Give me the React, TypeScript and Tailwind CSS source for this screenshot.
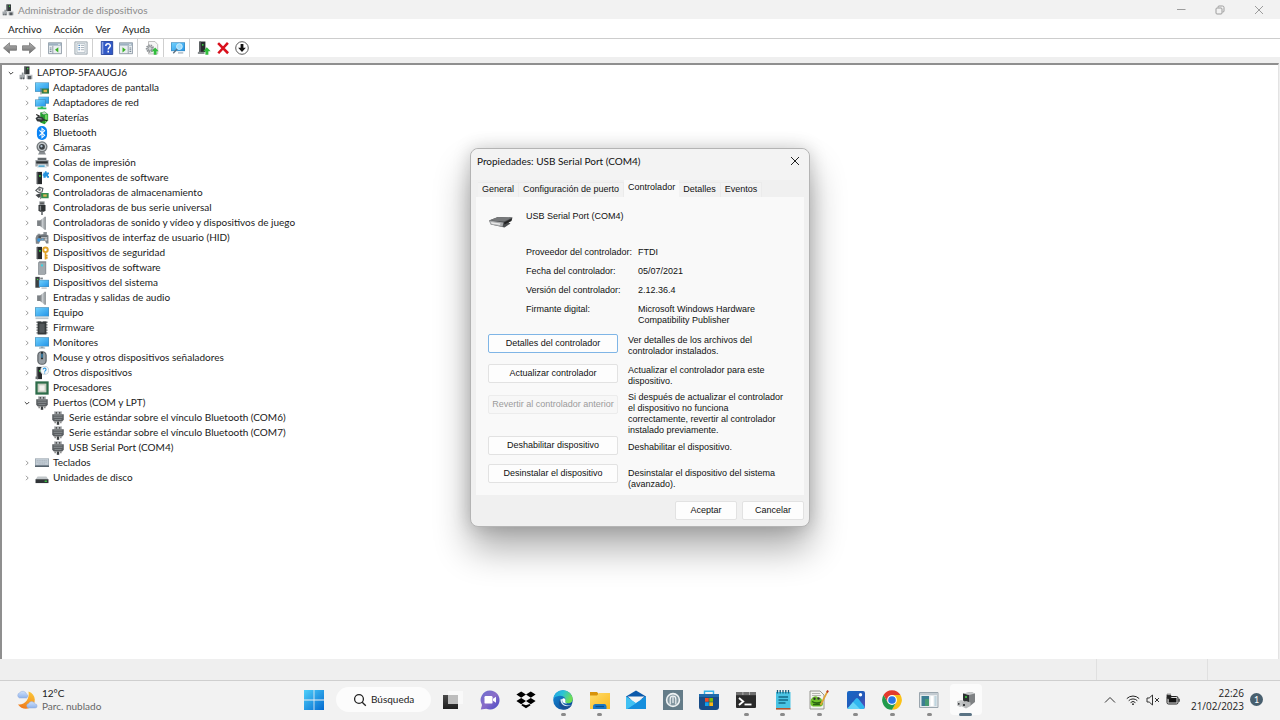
import type { ReactNode } from "react";

type IconProps = { children: ReactNode; className?: string };

function Svg16({ children, className = "size-3.5" }: IconProps) {
  return (
    <svg viewBox="0 0 16 16" className={`${className} shrink-0`} aria-hidden="true">
      {children}
    </svg>
  );
}

function Gradients() {
  return (
    <svg className="absolute size-0" aria-hidden="true">
      <defs>
        <linearGradient id="screen" x1="0" y1="0" x2="1" y2="1">
          <stop offset="0" stopColor="#6fd0fc" />
          <stop offset="1" stopColor="#2496ea" />
        </linearGradient>
        <linearGradient id="win" x1="0" y1="0" x2="1" y2="1">
          <stop offset="0" stopColor="#4fd0fb" />
          <stop offset="1" stopColor="#0269cf" />
        </linearGradient>
        <linearGradient id="chat" x1="0" y1="0" x2="1" y2="1">
          <stop offset="0" stopColor="#6b6fd0" />
          <stop offset="0.5" stopColor="#8a6cc8" />
          <stop offset="1" stopColor="#4348c6" />
        </linearGradient>
        <linearGradient id="edgeTop" x1="0" y1="0" x2="1" y2="0.4">
          <stop offset="0" stopColor="#1f9fe8" />
          <stop offset="0.5" stopColor="#2bc3d6" />
          <stop offset="1" stopColor="#6ede55" />
        </linearGradient>
        <linearGradient id="edgeLow" x1="0" y1="0" x2="0.8" y2="1">
          <stop offset="0" stopColor="#1690dc" />
          <stop offset="1" stopColor="#0c4a97" />
        </linearGradient>
        <linearGradient id="folder" x1="0" y1="0" x2="1" y2="1">
          <stop offset="0" stopColor="#ffdc6b" />
          <stop offset="1" stopColor="#fbb91e" />
        </linearGradient>
        <linearGradient id="photo" x1="0" y1="0" x2="1" y2="1">
          <stop offset="0" stopColor="#1767c5" />
          <stop offset="0.6" stopColor="#2659b8" />
          <stop offset="1" stopColor="#6a4bb8" />
        </linearGradient>
        <linearGradient id="moon" x1="0.7" y1="0" x2="0.3" y2="1">
          <stop offset="0" stopColor="#fbc537" />
          <stop offset="1" stopColor="#f07a1c" />
        </linearGradient>
        <linearGradient id="cloud" x1="0" y1="0" x2="0" y2="1">
          <stop offset="0" stopColor="#cfe1fb" />
          <stop offset="1" stopColor="#8fb3ec" />
        </linearGradient>
        <linearGradient id="dark" x1="0" y1="0" x2="0" y2="1">
          <stop offset="0" stopColor="#4a4a4a" />
          <stop offset="1" stopColor="#1e1e1e" />
        </linearGradient>
        <linearGradient id="cone" x1="0" y1="0" x2="1" y2="0">
          <stop offset="0" stopColor="#6c7175" />
          <stop offset="0.6" stopColor="#d3d7da" />
          <stop offset="1" stopColor="#7d8387" />
        </linearGradient>
        <linearGradient id="arrow" x1="0" y1="0" x2="0" y2="1">
          <stop offset="0" stopColor="#b5b5b5" />
          <stop offset="1" stopColor="#6e6e6e" />
        </linearGradient>
      </defs>
    </svg>
  );
}

/* ---------- device icons ---------- */

const Tower = () => (
  <>
    <path d="M2 1h6v14H2z" fill="#26292b" />
    <path d="M2 1h1.6v14H2z" fill="#55595c" />
    <circle cx="5.6" cy="5.6" r="1.1" fill="#35dd3b" />
  </>
);

const Computer = ({ className }: { className?: string }) => (
  <Svg16 className={className}>
    <path d="M6 0.5h6v9H6z" fill="#33383a" />
    <path d="M6 0.5h1.5v9H6z" fill="#6b7073" />
    <circle cx="10" cy="3" r="0.9" fill="#3fd444" />
    <path d="M3.2 7.5h2v3h-2z" fill="#8d9296" />
    <path d="M0.6 10h6.2v5H0.6z" fill="#a7acb0" />
    <path d="M8.6 10h6.8v5H8.6z" fill="#b9bdc0" />
    <path d="M1.8 13h1.4v2H1.8zM4.4 13h1.4v2H4.4zM10 11.4h4v3.6h-4z" fill="#54595d" />
  </Svg16>
);

const Display = () => (
  <Svg16>
    <path d="M0 1.6h16v10.8H0z" fill="#4a8fb8" />
    <path d="M0.7 2.3h14.6v9.4H0.7z" fill="url(#screen)" />
    <path d="M7.5 8.6H16v5.8H7.5z" fill="#2f7a45" />
    <path d="M9.8 10h4v2.8h-4z" fill="#d9b34a" />
    <path d="M6.8 8v7.4" stroke="#777" />
  </Svg16>
);

const Network = () => (
  <Svg16>
    <path d="M4 0.8h12v8H4z" fill="#4a8fb8" />
    <path d="M4.6 1.4h10.8v6.8H4.6z" fill="url(#screen)" />
    <path d="M0 4h12.4v8H0z" fill="#3c84b0" />
    <path d="M0.6 4.6h11.2v6.8H0.6z" fill="url(#screen)" />
    <path d="M3 13.2h10v1.8H3zM6.4 12h3v2h-3z" fill="#2fbf5a" />
  </Svg16>
);

const Battery = () => (
  <Svg16>
    <path d="M6 1.6l5-1 4 3v7l-4 4.4-5-2z" fill="#259b31" />
    <path d="M7 2l4-.8 2.6 2L9.8 4z" fill="#c9d6cb" />
    <path d="M11.4 4.4v9.4l2.8-3.2V4z" fill="#6fd65f" />
    <path d="M0.6 8.4l3-2.6 5.6 1.6 1.4 3-3.4 2.2-4.8-.8z" fill="#33383a" />
    <path d="M1.4 4l4 2M9.6 10l4.4 1" stroke="#222" strokeWidth="1.3" />
    <path d="M3 8.6l4.6.6" stroke="#9da3a5" strokeWidth="1.2" />
  </Svg16>
);

const Bluetooth = () => (
  <Svg16>
    <rect x="2.2" y="0" width="11.6" height="16" rx="5.6" fill="#0a84f5" />
    <path d="M5 5l6 5.6-3 2.6V2.8l3 2.6L5 11" fill="none" stroke="#fff" strokeWidth="1.2" />
  </Svg16>
);

const Camera = () => (
  <Svg16>
    <circle cx="8" cy="6.6" r="6.3" fill="#74797c" />
    <circle cx="8" cy="6.6" r="4.8" fill="#c3c8cb" />
    <circle cx="8" cy="6.6" r="3.3" fill="#3b4044" />
    <circle cx="7.4" cy="6" r="1.3" fill="#b0c4d4" />
    <path d="M5 12.6h6l1.6 2.8H3.4z" fill="#878c90" />
  </Svg16>
);

const Printer = () => (
  <Svg16>
    <path d="M3 2h10v3H3z" fill="#63696d" />
    <path d="M0.4 4.6h15.2V12H0.4z" fill="#9ea4a8" />
    <path d="M1.4 6h13.2v2.6H1.4z" fill="#2e3335" />
    <path d="M3.4 9.6h9.2l1 4H2.4z" fill="#dfe9ee" />
    <path d="M4 10.6h7v2H4z" fill="#57a9cf" />
  </Svg16>
);

const Component = () => (
  <Svg16>
    <Tower />
    <path d="M9.6 1.8h1.8V.4h1.8v1.4H16v2h-1v1.8h1v2h-2.4V6.4h-1.4v1.2H9.6V5.4h-.8V3.6h.8z" fill="#2592dd" />
  </Svg16>
);

const Storage = () => (
  <Svg16>
    <path d="M1 5l4-3.6 4 1.4-1 4-4 .6z" fill="none" stroke="#555b5e" strokeWidth="1.3" />
    <circle cx="5.2" cy="4.2" r="1.5" fill="#777" />
    <path d="M0.6 10.4l6-2.4 2.6 2.4-5 3.4z" fill="#44494c" />
    <path d="M7 8h8.6v6H7z" fill="#338b4e" />
    <path d="M9.4 9.6h4v2.6h-4z" fill="#d7b653" />
    <path d="M6.4 7.2V15" stroke="#777" />
  </Svg16>
);

const UsbPlug = () => (
  <Svg16>
    <path d="M5 0.4h6V5H5z" fill="#8c9194" />
    <path d="M6.4 1.6h1v1.8h-1zM8.6 1.6h1v1.8h-1z" fill="#222" />
    <path d="M4 4.6h8v6l-1.6 1.8H5.6L4 10.6z" fill="#2f3335" />
    <path d="M5.4 5.4H7v5.4H5.4z" fill="#85898c" />
    <path d="M7.2 12.4h1.6V16H7.2z" fill="#4d5256" />
  </Svg16>
);

const Speaker = () => (
  <Svg16>
    <path d="M2.4 5h3.4v6.4H2.4z" fill="#7c8185" />
    <path d="M5.8 5L11 .8v15l-5.2-4.4z" fill="url(#cone)" />
    <path d="M11 .8h1.4v15H11z" fill="#878d91" />
  </Svg16>
);

const Hid = () => (
  <Svg16>
    <path d="M3 3.2h3v2H3zM9.6 1h4v3h-4z" fill="#8f9599" />
    <path d="M2 4.6L12 3l3.4 2.2v9h-2.6L11.4 11H6l-1.4 3.6H1L.6 8z" fill="#7e8489" />
    <path d="M4 5.4h10V8H4z" fill="#4a5054" />
    <path d="M7 6.6h7v1.2H7z" fill="#c9cdd0" />
    <circle cx="4.4" cy="10.2" r="2" fill="#3995dd" />
    <circle cx="8.6" cy="9.6" r="1.1" fill="#5baae0" />
    <circle cx="12.6" cy="9.8" r="1.4" fill="#c3c8cb" />
  </Svg16>
);

const Security = () => (
  <Svg16>
    <Tower />
    <circle cx="12" cy="4.4" r="2.6" fill="none" stroke="#dfa126" strokeWidth="2.2" />
    <path d="M12 7v8.4M12 11h2.4M12 13.6h2.4" stroke="#dfa126" strokeWidth="1.9" />
  </Svg16>
);

const SoftwareDevice = () => (
  <Svg16>
    <path d="M3.6 1.6L5 .4h7.8v13.8l-1.4 1.4H3.6z" fill="#868d92" />
    <path d="M4.4 2h7.4v13H4.4z" fill="#a2a9ae" />
    <circle cx="8" cy="5" r="1.2" fill="#31d7e8" />
  </Svg16>
);

const SystemDevice = () => (
  <Svg16>
    <path d="M0.4 1h5v12.4h-5z" fill="#3b4043" />
    <path d="M6 1.8h3v2H6z" fill="#7e8489" />
    <circle cx="3" cy="4" r="0.8" fill="#41dd44" />
    <path d="M4.4 4.4H16v8.2H4.4z" fill="#4a8fb8" />
    <path d="M5 5h10.4v7H5z" fill="url(#screen)" />
    <path d="M7.4 13.2h6v1.2h-6z" fill="#a2a9ae" />
  </Svg16>
);

const Desktop = ({ stand = true }: { stand?: boolean }) => (
  <Svg16>
    <path d="M0 1.4h16V12H0z" fill="#4a8fb8" />
    <path d="M0.7 2.1h14.6v9.2H0.7z" fill="url(#screen)" />
    {stand ? (
      <path d="M0.6 13h14.8v2H0.6z" fill="#b9c4cb" />
    ) : (
      <path d="M6.6 12h3v1.2h2v1.2h-7v-1.2h2z" fill="#8ea3b0" />
    )}
  </Svg16>
);

const Chip = () => (
  <Svg16>
    <path d="M1.6 1.4h12.8M1.6 4.4h12.8M1.6 7.4h12.8M1.6 10.4h12.8M1.6 13.6h12.8" stroke="#777c7f" strokeWidth="1.6" />
    <path d="M3 .6h3.4l1.6 1 1.6-1H13v14.8H3z" fill="#34383a" />
    <path d="M5 3h6v10.4H5z" fill="#53585b" />
  </Svg16>
);

const Mouse = () => (
  <Svg16>
    <rect x="2.6" y="0.2" width="10.8" height="15.6" rx="4.8" fill="#5b6165" />
    <rect x="4" y="1.4" width="8" height="13.2" rx="3.6" fill="#979ea3" />
    <path d="M6.8 1h2.4v8.4H6.8z" fill="#2b3033" />
    <path d="M7.4 3h1.2v4.6H7.4z" fill="#3fb1f1" />
  </Svg16>
);

const Unknown = () => (
  <Svg16>
    <Tower />
    <path d="M0.6 12h3v3h-3z" fill="#6a6e70" />
    <circle cx="11" cy="5" r="4.6" fill="#f4f8fa" stroke="#b4bcc1" strokeWidth="0.7" />
    <path d="M9.4 4a1.6 1.6 0 1 1 2.4 1.4c-.6.3-.8.5-.8 1.2M11 7.5v1" fill="none" stroke="#2592dd" strokeWidth="1.2" />
  </Svg16>
);

const Cpu = () => (
  <Svg16>
    <path d="M0.4 0.4h15.2v15.2H0.4z" fill="#2d6d4a" />
    <path d="M3 3h10v10H3z" fill="#c9cec2" />
    <path d="M5 5h6v6H5z" fill="#f2f2ee" />
  </Svg16>
);

const Port = () => (
  <Svg16>
    <path d="M3.6 0.4h8.8v3.4H3.6z" fill="#a9adb0" />
    <path d="M5.4 1h1.3v2.2H5.4zM9.3 1h1.3v2.2H9.3z" fill="#444" />
    <path d="M1.4 3.6h13.2V10l-1.8 2H3.2l-1.8-2z" fill="#5a5e61" />
    <path d="M3 5h10v1H3zM3 7h10v1H3zM4 9h8v1H4z" fill="#8c9194" />
    <path d="M6.6 12h2.8v3.8H6.6z" fill="#3b3f41" />
    <path d="M4 12h1.5v2H4zM10.5 12H12v2h-1.5z" fill="#777" />
  </Svg16>
);

const Keyboard = () => (
  <Svg16>
    <path d="M0 2.8h16v9H0z" fill="#8d9aa5" />
    <path d="M0.7 3.4h14.6v6.8H0.7z" fill="#c3cdd5" />
    <path d="M2 5h12M2 7h12M4 9h8" stroke="#a3aeb8" strokeWidth="0.8" strokeDasharray="1.5 .5" />
    <path d="M0 11h16v1.6H0z" fill="#55616b" />
  </Svg16>
);

const Disk = () => (
  <Svg16>
    <path d="M3 6.4h10l2.4 3.2H0.6z" fill="#c2c7ca" />
    <path d="M0.6 9.4h14.8v4.4H0.6z" fill="#303437" />
    <path d="M11 11h2.6v1.4H11z" fill="#3bdb42" />
  </Svg16>
);

/* ---------- device tree ---------- */

type Device = { label: string; icon: ReactNode; level: 0 | 1 | 2; state?: "open" | "closed" };

const devices: Device[] = [
  { label: "LAPTOP-5FAAUGJ6", icon: <Computer />, level: 0, state: "open" },
  { label: "Adaptadores de pantalla", icon: <Display />, level: 1, state: "closed" },
  { label: "Adaptadores de red", icon: <Network />, level: 1, state: "closed" },
  { label: "Baterías", icon: <Battery />, level: 1, state: "closed" },
  { label: "Bluetooth", icon: <Bluetooth />, level: 1, state: "closed" },
  { label: "Cámaras", icon: <Camera />, level: 1, state: "closed" },
  { label: "Colas de impresión", icon: <Printer />, level: 1, state: "closed" },
  { label: "Componentes de software", icon: <Component />, level: 1, state: "closed" },
  { label: "Controladoras de almacenamiento", icon: <Storage />, level: 1, state: "closed" },
  { label: "Controladoras de bus serie universal", icon: <UsbPlug />, level: 1, state: "closed" },
  { label: "Controladoras de sonido y vídeo y dispositivos de juego", icon: <Speaker />, level: 1, state: "closed" },
  { label: "Dispositivos de interfaz de usuario (HID)", icon: <Hid />, level: 1, state: "closed" },
  { label: "Dispositivos de seguridad", icon: <Security />, level: 1, state: "closed" },
  { label: "Dispositivos de software", icon: <SoftwareDevice />, level: 1, state: "closed" },
  { label: "Dispositivos del sistema", icon: <SystemDevice />, level: 1, state: "closed" },
  { label: "Entradas y salidas de audio", icon: <Speaker />, level: 1, state: "closed" },
  { label: "Equipo", icon: <Desktop />, level: 1, state: "closed" },
  { label: "Firmware", icon: <Chip />, level: 1, state: "closed" },
  { label: "Monitores", icon: <Desktop stand={false} />, level: 1, state: "closed" },
  { label: "Mouse y otros dispositivos señaladores", icon: <Mouse />, level: 1, state: "closed" },
  { label: "Otros dispositivos", icon: <Unknown />, level: 1, state: "closed" },
  { label: "Procesadores", icon: <Cpu />, level: 1, state: "closed" },
  { label: "Puertos (COM y LPT)", icon: <Port />, level: 1, state: "open" },
  { label: "Serie estándar sobre el vínculo Bluetooth (COM6)", icon: <Port />, level: 2 },
  { label: "Serie estándar sobre el vínculo Bluetooth (COM7)", icon: <Port />, level: 2 },
  { label: "USB Serial Port (COM4)", icon: <Port />, level: 2 },
  { label: "Teclados", icon: <Keyboard />, level: 1, state: "closed" },
  { label: "Unidades de disco", icon: <Disk />, level: 1, state: "closed" },
];

const indents = { 0: "pl-1", 1: "pl-5", 2: "pl-9" };

function DeviceTree() {
  return (
    <ul role="tree" className="text-[10px] leading-[15px] text-[#1a1a1a]">
      {devices.map((d) => (
        <li
          key={d.label}
          role="treeitem"
          aria-level={d.level + 1}
          className={`flex h-[15px] items-center ${indents[d.level]}`}
        >
          {d.state ? (
            <button
              type="button"
              aria-label={`${d.state === "open" ? "Contraer" : "Expandir"} ${d.label}`}
              className="mr-[3px] flex size-2.5 items-center justify-center"
            >
              <svg viewBox="0 0 10 10" className="size-2.5" fill="none">
                {d.state === "open" ? (
                  <path d="M2.8 4L5 6.2 7.2 4" stroke="#444" />
                ) : (
                  <path d="M4 2.8L6.2 5 4 7.2" stroke="#9a9a9a" />
                )}
              </svg>
            </button>
          ) : (
            <span className="mr-[3px] w-2.5" />
          )}
          {d.icon}
          <span className="ml-1 whitespace-nowrap">{d.label}</span>
        </li>
      ))}
    </ul>
  );
}

/* ---------- toolbar ---------- */

function ToolButton({ label, children }: { label: string; children: ReactNode }) {
  return (
    <button type="button" aria-label={label} className="flex size-3.5 items-center justify-center">
      <Svg16>{children}</Svg16>
    </button>
  );
}

const Sep = () => <span className="mr-[7px] ml-1 w-px self-stretch bg-[#cfcfcf]" />;
const Group = ({ children }: { children: ReactNode }) => <div className="flex items-center gap-[5px]">{children}</div>;

const WindowFrame = () => (
  <>
    <path d="M0.5 2h15v12.5h-15z" fill="#e9edf0" stroke="#8a97a2" />
    <path d="M1 2.500h14v2.800H1z" fill="#9db0c0" />
    <path d="M11.5 3.900h2.500" stroke="#e8eef2" />
  </>
);

function Toolbar() {
  return (
    <div role="toolbar" aria-label="Herramientas" className="flex h-[18px] items-center bg-white pl-[3px]">
      <Group>
        <ToolButton label="Atrás">
          <path d="M0.6 8L7.4 2v3.4h8v5.2h-8V14z" fill="url(#arrow)" stroke="#6b6b6b" strokeWidth="0.8" />
        </ToolButton>
        <ToolButton label="Adelante">
          <path d="M15.4 8L8.6 2v3.4h-8v5.2h8V14z" fill="url(#arrow)" stroke="#6b6b6b" strokeWidth="0.8" />
        </ToolButton>
      </Group>
      <Sep />
      <ToolButton label="Mostrar u ocultar árbol de consola">
        <WindowFrame />
        <path d="M5.5 5.5v9" stroke="#8a97a2" />
        <path d="M2 8h2M2 10h2M2 12h2" stroke="#67798a" />
        <path d="M11.8 7v6L8 10z" fill="#39b224" />
      </ToolButton>
      <Sep />
      <ToolButton label="Propiedades">
        <path d="M1 1h14v14H1z" fill="#e6eaed" stroke="#98a3ac" />
        <path d="M3.5 3h9v10h-9z" fill="#fff" stroke="#a5b1ba" strokeWidth="0.8" />
        <path d="M5 5h2M5 7.5h2M5 10h2" stroke="#5b92c4" strokeWidth="1.3" />
        <path d="M8 5h3.5M8 7.5h3.5M8 10h3.5" stroke="#9aa6af" />
      </ToolButton>
      <Sep />
      <Group>
        <ToolButton label="Ayuda">
          <path d="M1.5 0.5h13v15h-13z" fill="#3159c6" stroke="#1f3e98" />
          <path d="M2 1h1.8v14H2z" fill="#8ea6e6" />
          <path d="M6.6 5.6c0-3.4 5.2-3.2 5.2-.2 0 2-2.4 2-2.4 4.2M9.4 11.2v1.9" fill="none" stroke="#fff" strokeWidth="1.7" />
        </ToolButton>
        <ToolButton label="Mostrar u ocultar panel de acciones">
          <WindowFrame />
          <path d="M10.5 5.5v9" stroke="#8a97a2" />
          <path d="M12 8h2M12 10h2M12 12h2" stroke="#67798a" />
          <path d="M4 7v6l3.8-3z" fill="#39b224" />
        </ToolButton>
      </Group>
      <Sep />
      <ToolButton label="Actualizar controlador">
        <path d="M4 .6h7.4L14.5 4v10.8H4z" fill="#f5f5f5" stroke="#b0b0b0" strokeWidth="0.9" />
        <circle cx="5.6" cy="8.6" r="3.5" fill="none" stroke="#8d9296" strokeWidth="2.4" strokeDasharray="1.6 .8" />
        <circle cx="5.6" cy="8.6" r="2.2" fill="#d5d8da" stroke="#8d9296" />
        <path d="M11.6 7.4l4 4.2h-2.400v4H10v-4H7.600z" fill="#31bd3c" />
      </ToolButton>
      <Sep />
      <ToolButton label="Buscar cambios de hardware">
        <path d="M0 1.5h16v10.100H0z" fill="#3c89bc" />
        <path d="M0.7 2.2h14.600v8.700H0.700z" fill="url(#screen)" />
        <circle cx="9.6" cy="6.4" r="3.3" fill="#9adcfd" stroke="#dff3fd" strokeWidth="0.9" />
        <path d="M7 9L2.6 14" stroke="#5c7180" strokeWidth="1.6" />
        <path d="M8 12.8h6v1.600H8z" fill="#a9b8c3" />
      </ToolButton>
      <Sep />
      <Group>
        <ToolButton label="Agregar controladores">
          <path d="M2.6 0.6h7v12h-7z" fill="#272b2d" />
          <path d="M2.6 0.6h1.8v12H2.6z" fill="#5a5f62" />
          <circle cx="6.6" cy="4.4" r="1" fill="#3bdb42" />
          <path d="M1 12.4h7.6v2.4H1z" fill="#84898c" />
          <path d="M11.2 7l4.4 4.6H13v4H9.6v-4H7z" fill="#31bd3c" />
        </ToolButton>
        <ToolButton label="Desinstalar dispositivo">
          <path d="M2.4 2.4L13.8 14M13.6 2.2L2.6 14" stroke="#d9101c" strokeWidth="2.9" />
        </ToolButton>
        <ToolButton label="Deshabilitar dispositivo">
          <circle cx="8" cy="8" r="7.2" fill="#fff" stroke="#555" strokeWidth="1.1" />
          <path d="M6.4 3.4h3.2v4.2h2.8L8 12.6 3.6 7.6h2.8z" fill="#111" />
        </ToolButton>
      </Group>
    </div>
  );
}

/* ---------- properties dialog ---------- */

const tabs = ["General", "Configuración de puerto", "Controlador", "Detalles", "Eventos"];

const facts = [
  ["Proveedor del controlador:", "FTDI"],
  ["Fecha del controlador:", "05/07/2021"],
  ["Versión del controlador:", "2.12.36.4"],
  ["Firmante digital:", "Microsoft Windows Hardware Compatibility Publisher"],
];

const actions = [
  { id: "details", label: "Detalles del controlador", text: "Ver detalles de los archivos del controlador instalados.", row: "h-[30px]", button: "border-[#7fb5e6]", desc: "pt-px" },
  { id: "update", label: "Actualizar controlador", text: "Actualizar el controlador para este dispositivo.", row: "h-[27px]", button: "border-[#e2e2e2]", desc: "pt-px" },
  { id: "revert", label: "Revertir al controlador anterior", text: "Si después de actualizar el controlador el dispositivo no funciona correctamente, revertir al controlador instalado previamente.", row: "h-[45px]", button: "mt-1 border-[#ececec]", desc: "pt-px", disabled: true },
  { id: "disable", label: "Deshabilitar dispositivo", text: "Deshabilitar el dispositivo.", row: "h-7", button: "border-[#e2e2e2]", desc: "pt-1.5" },
  { id: "uninstall", label: "Desinstalar el dispositivo", text: "Desinstalar el dispositivo del sistema (avanzado).", row: "h-[30px]", button: "border-[#e2e2e2]", desc: "pt-1" },
];

function PropertiesDialog() {
  return (
    <section
      role="dialog"
      aria-labelledby="dialog-title"
      className="flex w-[340px] flex-col rounded-lg border border-[#b4b4b4] bg-[#f0f0f0] px-[5px] pb-1.5 font-['Liberation_Sans',Arial,sans-serif] text-[9px] leading-[11px] text-[#111] shadow-[0_22px_36px_rgba(0,0,0,0.32),0_0_18px_rgba(0,0,0,0.18)]"
    >
      <header className="-mx-[5px] flex h-[31px] items-center justify-between rounded-t-lg bg-[#f3f3f3] pr-2 pb-2 pl-1.5">
        <h2 id="dialog-title" className="font-[Lato,'Noto_Sans',sans-serif] text-[10px] leading-4">
          Propiedades: USB Serial Port (COM4)
        </h2>
        <button type="button" aria-label="Cerrar" className="flex size-3 items-center justify-center">
          <svg viewBox="0 0 12 12" className="size-3" fill="none" stroke="#222">
            <path d="M2 2l8 8M10 2l-8 8" />
          </svg>
        </button>
      </header>
      <div role="tablist" className="flex items-end pl-0.5">
        {tabs.map((t) => (
          <button
            key={t}
            type="button"
            role="tab"
            aria-selected={t === "Controlador"}
            className={
              t === "Controlador"
                ? "h-[17px] bg-[#f9f9f9] px-1 pb-0.5"
                : "h-[15px] border-t border-r border-[#ebebeb] bg-[#f2f2f2] px-1 pb-0.5"
            }
          >
            {t}
          </button>
        ))}
      </div>
      <div role="tabpanel" className="bg-[#f9f9f9] pt-3.5 pr-4 pb-px pl-3">
        <div className="flex h-9">
          <svg viewBox="0 0 26 14" className="mt-1 h-3.5 w-[26px]" aria-hidden="true">
            <path d="M1 5.5L10 2l14.5.5-1 3.5-3 1.5 2 1-6 4L3 9.500z" fill="#4b4d4f" />
            <path d="M1 5.5L10 2l14.5.5-8.500 4z" fill="#77797b" />
            <path d="M1 5.5l14.5 2-1 4.3L2.500 9.500z" fill="#a9abad" />
            <path d="M3 7l9.5 1.5-.5 1.6-8.500-1.400z" fill="#e8e8e8" />
            <path d="M16 7.500l8-4-1 2.500-6.500 3.500z" fill="#222" />
          </svg>
          <p className="ml-3">USB Serial Port (COM4)</p>
        </div>
        <dl className="ml-[38px] grid h-[87px] auto-rows-[19px] grid-cols-[112px_1fr]">
          {facts.map(([k, v]) => (
            <div key={k} className="contents">
              <dt className="whitespace-nowrap">{k}</dt>
              <dd className="pr-2">{v}</dd>
            </div>
          ))}
        </dl>
        {actions.map((a) => (
          <div key={a.id} className={`flex items-start ${a.row}`}>
            <button
              type="button"
              disabled={a.disabled}
              aria-describedby={`${a.id}-text`}
              className={`mr-2.5 h-[19px] w-[130px] shrink-0 rounded-xs border bg-[#fdfdfd] text-center whitespace-nowrap disabled:bg-[#f7f7f7] disabled:text-[#9b9b9b] ${a.button}`}
            >
              {a.label}
            </button>
            <p id={`${a.id}-text`} className={a.desc}>
              {a.text}
            </p>
          </div>
        ))}
      </div>
      <footer className="mt-1.5 flex justify-end gap-[5px]">
        {["Aceptar", "Cancelar"].map((b) => (
          <button key={b} type="button" className="h-[19px] w-[62px] rounded-xs border border-[#e2e2e2] bg-[#fdfdfd]">
            {b}
          </button>
        ))}
      </footer>
    </section>
  );
}

/* ---------- taskbar ---------- */

function TaskIcon({ children }: { children: ReactNode }) {
  return (
    <svg viewBox="0 0 20 20" className="size-5" aria-hidden="true">
      {children}
    </svg>
  );
}

type TaskApp = { name: string; mark?: "dot" | "active"; art: ReactNode };

const apps: TaskApp[] = [
  {
    name: "Vista de tareas",
    art: (
      <>
        <path d="M0 5h15v14H0z" fill="url(#dark)" />
        <path d="M5 1h15v13H5z" fill="#fafafa" fillOpacity="0.85" />
        <path d="M5 5h10v9H5z" fill="#bdbdbd" />
      </>
    ),
  },
  {
    name: "Chat",
    art: (
      <>
        <path d="M10 .5a9.5 9.5 0 1 1-3.8 18.2L.8 19.500l1.200-4.600A9.500 9.500 0 0 1 10 .5z" fill="url(#chat)" />
        <rect x="4.5" y="6" width="8" height="7.6" rx="1.2" fill="#fff" />
        <path d="M13 8.800l3-2v6l-3-2z" fill="#fff" />
      </>
    ),
  },
  {
    name: "Dropbox",
    art: (
      <path
        d="M5.2 1.5L10 4.600 5.200 7.700.4 4.600zM14.800 1.500l4.800 3.100-4.800 3.100L10 4.600zM5.200 8l4.800 3.100-4.800 3.100-4.800-3.100zM14.800 8l4.800 3.100-4.800 3.100L10 11.100zM10 15.200l3.600-1.200 1 1.200-4.600 3-4.600-3 1-1.200z"
        fill="#000"
      />
    ),
  },
  {
    name: "Microsoft Edge",
    mark: "dot",
    art: (
      <>
        <circle cx="10" cy="10" r="9.8" fill="url(#edgeLow)" />
        <path d="M.3 9C1.500-.5 12-2 17 3.200c4 4.200 3.500 9.300-.8 10-2.500.4-4.600-.3-4.400-1.500.2-.8.900-1 .7-2.400C12.100 6.800 9.500 5.600 6.500 5.800 3.500 6 1.200 7.500.3 9z" fill="url(#edgeTop)" />
        <path d="M7.300 9.500c-.8 4 2.600 7.700 6.900 7.300 2-.2 3.700-1.200 4.500-1.900-3 1.400-8 .8-9.200-2.600-.5-1.600 0-2.700.8-3.500z" fill="#f2f8fc" fillOpacity="0.9" />
        <path d="M7.300 9.500C4.500 13 7 19 12 19.600c3.500-.3 6-2.500 7-5-2.500 2-7.500 2.400-10-.6-1-1.300-1.800-2.900-1.700-4.500z" fill="#174f93" />
        <path d="M10.300 8.300c1.800-.2 2.600 1.500 2 2.700-.6 1.300.3 2 2 2.400-2.700.6-4.800-.7-5-2.600-.1-1.200.3-2.200 1-2.500z" fill="#fff" />
      </>
    ),
  },
  {
    name: "Explorador de archivos",
    mark: "dot",
    art: (
      <>
        <path d="M0 2h7l2 2.500V7H0z" fill="#d8930b" />
        <path d="M0 5.500h7L9 3h11v16H0z" fill="url(#folder)" />
        <path d="M3 19v-2.500Q3 14 5.500 14h9q2 0 2 2.500V19z" fill="#1b77c5" />
        <path d="M5.500 16.500h8.500" stroke="#0c4f8b" strokeWidth="1.3" />
      </>
    ),
  },
  {
    name: "Correo",
    art: (
      <>
        <path d="M0 6.500L10 .5l10 6v3H0z" fill="#0b59ab" />
        <path d="M1.500 6.500h17L10 13.500z" fill="#f4f4f4" />
        <path d="M0 6.500l10 6.800 10-6.800V19H0z" fill="#2fb1ee" />
        <path d="M20 6.500L1 19h19z" fill="#168fdd" />
        <path d="M0 6.500L10 13.200 1 19H0z" fill="#41c1f3" />
      </>
    ),
  },
  {
    name: "Soporte",
    art: (
      <>
        <path d="M0 0h20v20H0z" fill="#647c88" />
        <circle cx="10" cy="10" r="6.4" fill="#8397a0" stroke="#eef2f3" strokeWidth="1.6" />
        <path d="M7.200 14.500V9a2.800 2.800 0 0 1 5.600 0v5.500M10 7v6" fill="none" stroke="#eef2f3" strokeWidth="1.2" />
      </>
    ),
  },
  {
    name: "Microsoft Store",
    art: (
      <>
        <path d="M5.500 5V1.200h9V5" fill="none" stroke="#34b4ea" strokeWidth="1.4" />
        <path d="M0 4h20v13a3 3 0 0 1-3 3H3a3 3 0 0 1-3-3z" fill="#184c87" />
        <path d="M0 4h20v3H0z" fill="#1f6bab" />
        <path d="M6 8h3.700v3.700H6z" fill="#ef4a26" />
        <path d="M10.300 8H14v3.700h-3.700z" fill="#7cba0a" />
        <path d="M6 12.300h3.700V16H6z" fill="#12a1ec" />
        <path d="M10.300 12.300H14V16h-3.700z" fill="#fdb813" />
      </>
    ),
  },
  {
    name: "Símbolo del sistema",
    mark: "dot",
    art: (
      <>
        <rect y="2" width="20" height="16" rx="1" fill="#2b2b2b" />
        <path d="M0 2h20v3.200H0z" fill="#707070" />
        <path d="M6.500 2h.8v3h-.8zM13 2h.8v3H13z" fill="#bbb" />
        <path d="M3 8l4.200 3.500L3 15" fill="none" stroke="#fff" strokeWidth="1.9" />
        <path d="M8.500 14.500h7" stroke="#fff" strokeWidth="1.8" />
      </>
    ),
  },
  {
    name: "Bloc de notas",
    mark: "dot",
    art: (
      <>
        <path d="M3 2h14.500v16H3z" fill="#4ac4e4" />
        <path d="M3 18h14.500v1.600H3z" fill="#b5532c" />
        <path d="M4.500 0v3.500M7.200 0v3.500M10 0v3.500M12.800 0v3.500M15.500 0v3.500" stroke="#185c77" strokeWidth="1.3" />
        <path d="M5.500 7h9.500M5.500 10h9.500M5.500 13h7" stroke="#136987" strokeWidth="1.4" />
      </>
    ),
  },
  {
    name: "Notepad++",
    mark: "dot",
    art: (
      <>
        <path d="M1 1h10l4 4v14H1z" fill="#f3f3f0" stroke="#8d8d86" strokeWidth="0.9" />
        <path d="M3 3.500h8M3 5.500h9" stroke="#b6b6b0" />
        <path d="M2 9.500c2-3.500 5-4 7-2.300 3 .3 4.500 2 4 4.300 2 1.500 1 5-1.500 5H4c-3-1-3-4-2-7z" fill="#6fc12c" />
        <path d="M3 11.500c3 2 6 2 9.500.5M4 14.500h8" fill="none" stroke="#2a6412" strokeWidth="1.4" />
        <circle cx="5.5" cy="8.8" r="1.2" fill="#333" />
        <circle cx="9.5" cy="8.5" r="1.2" fill="#333" />
        <path d="M18.800.8L11.500 15" stroke="#e1a437" strokeWidth="1.7" />
        <path d="M19 .5l-1 2" stroke="#bf3b2c" strokeWidth="1.8" />
      </>
    ),
  },
  {
    name: "Fotos",
    mark: "dot",
    art: (
      <>
        <rect x="1" y="1" width="18" height="18" rx="2" fill="url(#photo)" />
        <path d="M1.500 18.500l8.200-9.800q1.300-1.200 2.600 0l6.500 8.300-1 2H3z" fill="#31b7f0" />
        <path d="M1.500 18.500l5.500-6.600 7 7.100H3z" fill="#7ce0f9" fillOpacity="0.7" />
        <circle cx="14.5" cy="4.8" r="1.7" fill="#fff" />
      </>
    ),
  },
  {
    name: "Google Chrome",
    mark: "dot",
    art: (
      <>
        <path d="M1.500 5.100A9.800 9.800 0 0 1 18.500 5.100L10 5.200 5.800 12.400z" fill="#e33b2e" />
        <path d="M18.500 5.100A9.800 9.800 0 0 1 10 19.800L14.200 12.400 10 5.100z" fill="#fbc116" />
        <path d="M1.500 5.100A9.800 9.800 0 0 0 10 19.800l4.200-7.400H5.800z" fill="#229b4c" />
        <circle cx="10" cy="10" r="4.9" fill="#fff" />
        <circle cx="10" cy="10" r="3.8" fill="#2b76e5" />
      </>
    ),
  },
  {
    name: "Monitor serie",
    mark: "dot",
    art: (
      <>
        <path d="M.5 2.500h18.500v15H.5z" fill="#e5e9ec" stroke="#9aa5ad" />
        <path d="M1 3h17.500v2H1z" fill="#c3cbd1" />
        <path d="M2.500 6H10v10H2.500z" fill="#3b7d92" />
        <path d="M6 9h4v7H6z" fill="#459a71" />
        <path d="M11.500 6h3v10h-3z" fill="#fff" />
        <path d="M15.500 6h2v10h-2z" fill="#bfd5df" />
      </>
    ),
  },
  {
    name: "Administrador de dispositivos",
    mark: "active",
    art: (
      <>
        <path d="M7 3.500l8-1.500 4 1.500v8.500l-5 4-7-3z" fill="#7e8183" />
        <path d="M7 3.500l6 1.200V15l-6-2.500z" fill="#2c2f31" />
        <path d="M7 3.500L15 2l4 1.500-6 1.500z" fill="#c9cbcc" />
        <circle cx="10" cy="7" r="1" fill="#42dd45" />
        <path d="M1 11.500L5 10l3.500 1-.5 4.500-4 1.500-3-1.500z" fill="#c4c6c7" />
        <path d="M6 12.500l4-1.500 4.500 1.500v3.500L10 18.500 6 16.500z" fill="#b8babb" />
        <path d="M2 13h1.500v1.800H2zM7 14h2v2H7z" fill="#3b3e40" />
      </>
    ),
  },
];

function Taskbar() {
  return (
    <footer className="grid h-10 shrink-0 grid-cols-[1fr_auto_1fr] border-t border-[#cfcfcf] bg-[#f2f2f2] pb-0.5 text-[#222]">
      <button type="button" className="flex items-center justify-self-start pl-4 text-left text-[10px] leading-[13px]">
        <svg viewBox="0 0 22 20" className="mr-1 h-5 w-[22px]" aria-hidden="true">
          <path d="M12.500 1.500c8 2.500 8.500 13.500 1 16.500-4 1.500-9 .5-11.500-3.500 6.500 1 12-5.500 10.500-13z" fill="url(#moon)" />
          <path d="M3.500 8a2.800 2.800 0 0 1 0-5.200A4 4 0 0 1 10.500 4a2.200 2.200 0 0 1 0 4z" fill="url(#cloud)" stroke="#8fa9dc" strokeWidth="0.5" />
          <path d="M12.500 18a2.300 2.300 0 0 1 0-4.500 3.600 3.600 0 0 1 6.600.5 2 2 0 0 1 0 4z" fill="url(#cloud)" stroke="#8fa9dc" strokeWidth="0.5" />
        </svg>
        <span className="flex flex-col">
          <span>12°C</span>
          <span className="text-[#666]">Parc. nublado</span>
        </span>
      </button>

      <nav aria-label="Aplicaciones" className="flex items-stretch">
        <button type="button" aria-label="Inicio" className="flex w-9 items-center justify-center">
          <TaskIcon>
            <path d="M0 0h9.600v9.600H0zM10.400 0H20v9.600h-9.600zM0 10.400h9.600V20H0zM10.400 10.400H20V20h-9.600z" fill="url(#win)" />
          </TaskIcon>
        </button>
        <button
          type="button"
          className="mr-1 ml-1 flex h-[25px] w-[95px] items-center gap-1 self-center rounded-full bg-[#fcfcfc] pl-[17px] text-[10px]"
        >
          <svg viewBox="0 0 14 14" className="size-3.5" fill="none" stroke="#222" strokeWidth="1.3">
            <circle cx="6" cy="6" r="4.4" />
            <path d="M9.200 9.200l3.600 3.600" />
          </svg>
          Búsqueda
        </button>
        <ul className="flex w-[549px]">
          {apps.map((a) => (
            <li key={a.name} className="flex flex-1 justify-center">
              <button
                type="button"
                aria-label={a.name}
                className={`relative my-[3px] flex w-8 items-center justify-center rounded ${a.mark === "active" ? "bg-[#fbfbfb]" : ""}`}
              >
                <TaskIcon>{a.art}</TaskIcon>
                {a.mark === "dot" && <span className="absolute -bottom-px h-[3px] w-[5px] rounded-full bg-[#8a8a8a]" />}
                {a.mark === "active" && <span className="absolute -bottom-px h-[3px] w-[13px] rounded-full bg-[#5a7384]" />}
              </button>
            </li>
          ))}
        </ul>
      </nav>

      <div className="flex items-center justify-self-end pr-[17px]">
        <button type="button" aria-label="Mostrar iconos ocultos" className="mr-[9px]">
          <svg viewBox="0 0 14 14" className="size-3.5" fill="none" stroke="#333">
            <path d="M2 9.500l5-5 5 5" />
          </svg>
        </button>
        <button type="button" aria-label="Red, sonido y batería" className="flex items-center gap-1.5">
          <svg viewBox="0 0 14 14" className="size-3.5" fill="none" stroke="#222">
            <path d="M.8 5.600a8.800 8.800 0 0 1 12.400 0M2.700 7.700a6.100 6.100 0 0 1 8.600 0M4.600 9.600a3.400 3.400 0 0 1 4.800 0" />
            <circle cx="7" cy="11.200" r="0.9" fill="#222" stroke="none" />
          </svg>
          <svg viewBox="0 0 14 14" className="size-3.5" fill="none" stroke="#333">
            <path d="M1 5h2.200L6.500 2v10L3.200 9H1zM9 5l4 4M13 5L9 9" />
          </svg>
          <svg viewBox="0 0 14 14" className="size-3.5">
            <rect x="1" y="3.5" width="11" height="7.5" rx="1.5" fill="#ddd" stroke="#222" />
            <path d="M3 5h7.500v4.500H2.500z" fill="#111" />
            <path d="M12.500 5.700h1.200v3h-1.200z" fill="#222" />
            <path d="M1 1.500v2.500a2 2 0 0 0 4 0V2.500H1M2 .5v2M4 .5v2" fill="#222" stroke="#222" strokeWidth="0.8" />
          </svg>
        </button>
        <button
          type="button"
          className="ml-2.5 w-[54px] text-right font-['Open_Sans','Noto_Sans',sans-serif] text-[10px] leading-[13px]"
        >
          22:26
          <br />
          21/02/2023
        </button>
        <button
          type="button"
          aria-label="1 notificación"
          className="ml-1.5 flex size-[13px] items-center justify-center rounded-full bg-[#485f6e] text-[9px] text-white"
        >
          1
        </button>
      </div>
    </footer>
  );
}

/* ---------- main window ---------- */

export default function App() {
  return (
    <div className="relative flex min-h-screen flex-col bg-[#efefef] font-[Lato,'Noto_Sans',sans-serif]">
      <Gradients />
      <header className="flex h-[19px] items-center bg-[#f2f2f2] pl-0.5">
        <Computer className="size-3" />
        <h1 className="ml-1 text-[10px] leading-4 text-[#8c8c8c]">Administrador de dispositivos</h1>
        <div className="ml-auto flex gap-[27px] pr-[15px]">
          <button type="button" aria-label="Minimizar">
            <svg viewBox="0 0 12 12" className="size-3" stroke="#9c9c9c">
              <path d="M2 5.500h8.500" />
            </svg>
          </button>
          <button type="button" aria-label="Restaurar">
            <svg viewBox="0 0 12 12" className="size-3" fill="none" stroke="#9c9c9c">
              <rect x="2" y="4" width="6" height="6" rx="1" />
              <path d="M4 3.500V3q0-1 1-1h3.500Q10 2 10 3.500V7q0 1-1 1h-.5" />
            </svg>
          </button>
          <button type="button" aria-label="Cerrar ventana">
            <svg viewBox="0 0 12 12" className="size-3" stroke="#9c9c9c">
              <path d="M2 2l8 8M10 2l-8 8" />
            </svg>
          </button>
        </div>
      </header>

      <nav aria-label="Menú" className="flex h-5 items-center gap-3 border-b border-[#cdcdcd] bg-white pt-0.5 pl-2 text-[10px] text-[#1a1a1a]">
        {["Archivo", "Acción", "Ver", "Ayuda"].map((m) => (
          <button key={m} type="button">
            {m}
          </button>
        ))}
      </nav>
      <Toolbar />

      <main className="mt-1.5 mr-px flex-1 border-t-2 border-r border-l-2 border-t-[#8f8f8f] border-r-[#e3e3e3] border-l-[#8f8f8f] bg-white">
        <DeviceTree />
      </main>

      <div className="flex h-[21px] shrink-0 justify-end">
        <span className="w-[111px] border-l border-[#e0e0e0]" />
        <span className="w-[73px] border-l border-[#e0e0e0]" />
      </div>
      <Taskbar />

      <div className="absolute inset-x-0 top-[148px] flex justify-center">
        <PropertiesDialog />
      </div>
    </div>
  );
}
